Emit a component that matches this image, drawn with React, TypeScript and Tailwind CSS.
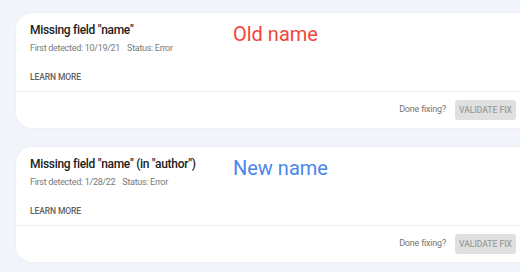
import React from "react";

type Issue = {
  title: string;
  detected: string;
  note: string;
  noteColor: string;
};

const issues: Issue[] = [
  {
    title: 'Missing field "name"',
    detected: "10/19/21",
    note: "Old name",
    noteColor: "text-[#f2453a]",
  },
  {
    title: 'Missing field "name" (in "author")',
    detected: "1/28/22",
    note: "New name",
    noteColor: "text-[#4a86ec]",
  },
];

const IssueCard: React.FC<{ issue: Issue }> = ({ issue }) => (
  <div className="ml-4 w-[520px] rounded-2xl bg-white shadow-[0_0_0_1px_#eef0f5]">
    <div className="flex h-[78px] pt-[8px] pl-[14px]">
      <div className="flex w-[203px] flex-col">
        <h2 className="text-[12px] leading-[18px] font-medium tracking-[-0.3px] text-[#212121]">
          {issue.title}
        </h2>
        <p className="mt-[2px] text-[9px] leading-[14px] tracking-[-0.3px] text-[#7a7a7a]">
          First detected: {issue.detected}
          <span className="ml-[7px]">Status: Error</span>
        </p>
        <button className="mt-auto mb-[7px] self-start text-[8.5px] leading-[14px] font-medium tracking-[-0.1px] text-[#5f5f5f]">
          LEARN MORE
        </button>
      </div>
      <div className={`text-[20px] leading-[26px] ${issue.noteColor}`}>
        {issue.note}
      </div>
    </div>
    <div className="flex h-[37px] items-center justify-end gap-[9px] border-t border-[#eeeeee] pr-[20px]">
      <span className="text-[9px] tracking-[-0.2px] text-[#757575]">Done fixing?</span>
      <button className="h-[20px] w-[61px] whitespace-nowrap rounded-[3px] bg-[#e0e0e0] text-[8.5px] font-medium text-[#9e9e9e]">
        VALIDATE FIX
      </button>
    </div>
  </div>
);

export default function App() {
  return (
    <div
      className="flex h-[272px] w-[520px] flex-col gap-[19px] overflow-hidden bg-[#f1f4fb] pt-[13px]"
      style={{ fontFamily: "Roboto, 'Liberation Sans', sans-serif" }}
    >
      {issues.map((issue) => (
        <IssueCard key={issue.title} issue={issue} />
      ))}
    </div>
  );
}
